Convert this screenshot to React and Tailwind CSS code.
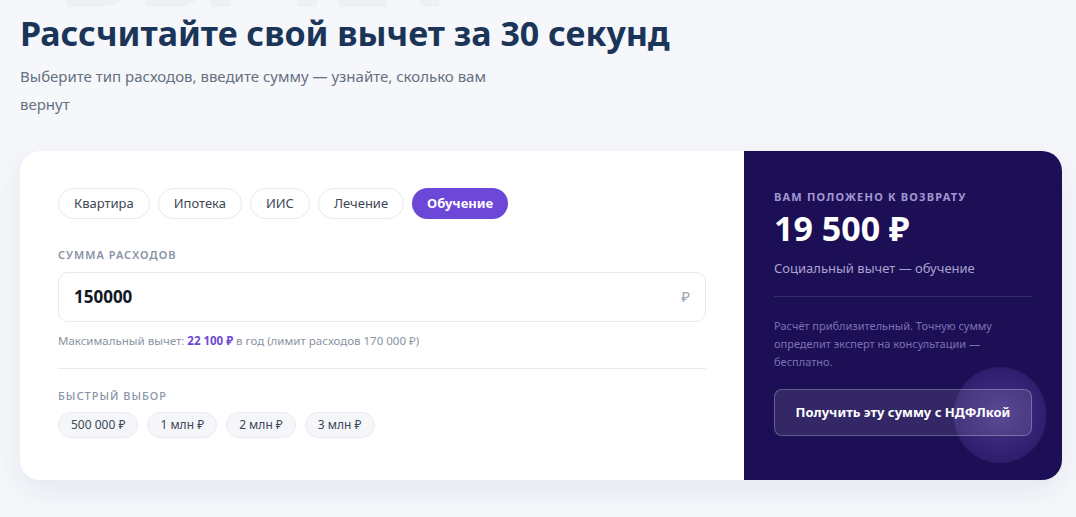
import React, { useState } from 'react';

const types = ['Квартира', 'Ипотека', 'ИИС', 'Лечение', 'Обучение'];
const quick = ['500 000 ₽', '1 млн ₽', '2 млн ₽', '3 млн ₽'];

const App = () => {
  const [active, setActive] = useState('Обучение');
  const [sum, setSum] = useState('150000');

  return (
    <div className="relative min-h-[517px] w-[1076px] overflow-hidden bg-[#f5f7fb] font-['Noto_Sans',sans-serif]">
      <div aria-hidden="true" className="pointer-events-none absolute left-[58px] top-[-92px] select-none text-[112px] font-extrabold leading-none tracking-[4px] text-[#edf0f5]">
        ВЫЧЕТ
      </div>

      <div className="relative px-[20px] pt-[9px]">
        <h1 className="text-[34px] font-bold leading-[48px] tracking-[0px] text-[#1b3558]">
          Рассчитайте свой вычет за 30 секунд
        </h1>
        <p className="mt-[5px] w-[500px] text-[15px] leading-[28px] text-[#66707f]">
          Выберите тип расходов, введите сумму — узнайте, сколько вам вернут
        </p>

        <div className="mt-[33px] flex h-[329px] w-[1042px] overflow-hidden rounded-[20px] bg-white shadow-[0_10px_30px_rgba(30,40,80,0.08)]">
          <div className="flex-1 px-[38px] pt-[37px]">
            <div className="flex gap-[8px]">
              {types.map(t => (
                <button
                  key={t}
                  onClick={() => setActive(t)}
                  className={`h-[31px] rounded-full px-[15px] text-[13px] ${
                    t === active
                      ? 'bg-[#6c47d8] font-bold text-white'
                      : 'border border-[#e6e9ef] bg-white text-[#3d4656]'
                  }`}
                >
                  {t}
                </button>
              ))}
            </div>

            <div className="mt-[28px] text-[11px] font-semibold uppercase tracking-[1px] text-[#8993a4]">Сумма расходов</div>
            <div className="mt-[8px] flex h-[50px] items-center rounded-[10px] border border-[#e6e9ef] px-[15px]">
              <input
                value={sum}
                onChange={e => setSum(e.target.value)}
                className="flex-1 bg-transparent text-[17px] font-bold text-[#111827] outline-none"
              />
              <span className="text-[15px] text-[#9aa3b2]">₽</span>
            </div>
            <div className="mt-[10px] text-[11.5px] text-[#8a93a3]">
              Максимальный вычет: <span className="font-bold text-[#6c47d8]">22 100 ₽</span> в год (лимит расходов 170 000 ₽)
            </div>

            <div className="mt-[19px] h-px bg-[#e8ebf0]" />

            <div className="mt-[19px] text-[11px] font-medium uppercase tracking-[1px] text-[#8993a4]">Быстрый выбор</div>
            <div className="mt-[8px] flex gap-[9px]">
              {quick.map(q => (
                <button
                  key={q}
                  className="h-[26px] rounded-full border border-[#e8ebf1] bg-[#f4f6f9] px-[12px] text-[12px] text-[#3d4656]"
                >
                  {q}
                </button>
              ))}
            </div>
          </div>

          <div className="relative w-[318px] overflow-hidden bg-[#1c0f55] px-[30px] pt-[38px]">
            <div className="pointer-events-none absolute left-[210px] top-[216px] h-[96px] w-[92px] rounded-full bg-[radial-gradient(circle,rgba(150,120,230,0.35),rgba(130,100,220,0.2)_65%,rgba(120,90,210,0)_100%)]" />
            <div className="relative">
              <div className="text-[11px] font-bold uppercase tracking-[1.2px] text-[#a597d4]">Вам положено к возврату</div>
              <div className="mt-[0px] text-[34px] font-bold leading-[44px] text-white">19 500 ₽</div>
              <div className="mt-[9px] text-[13px] text-[#aaa2cf]">Социальный вычет — обучение</div>
              <div className="mt-[18px] h-px bg-[#352a6c]" />
              <p className="mt-[20px] text-[11px] leading-[18px] text-[#7d70b4]">
                Расчёт приблизительный. Точную сумму определит эксперт на консультации — бесплатно.
              </p>
              <button className="mt-[18px] h-[47px] w-full rounded-[8px] border border-white/25 bg-white/10 text-[13px] font-bold text-white">
                Получить эту сумму с НДФЛкой
              </button>
            </div>
          </div>
        </div>
      </div>
    </div>
  );
};

export default App;
